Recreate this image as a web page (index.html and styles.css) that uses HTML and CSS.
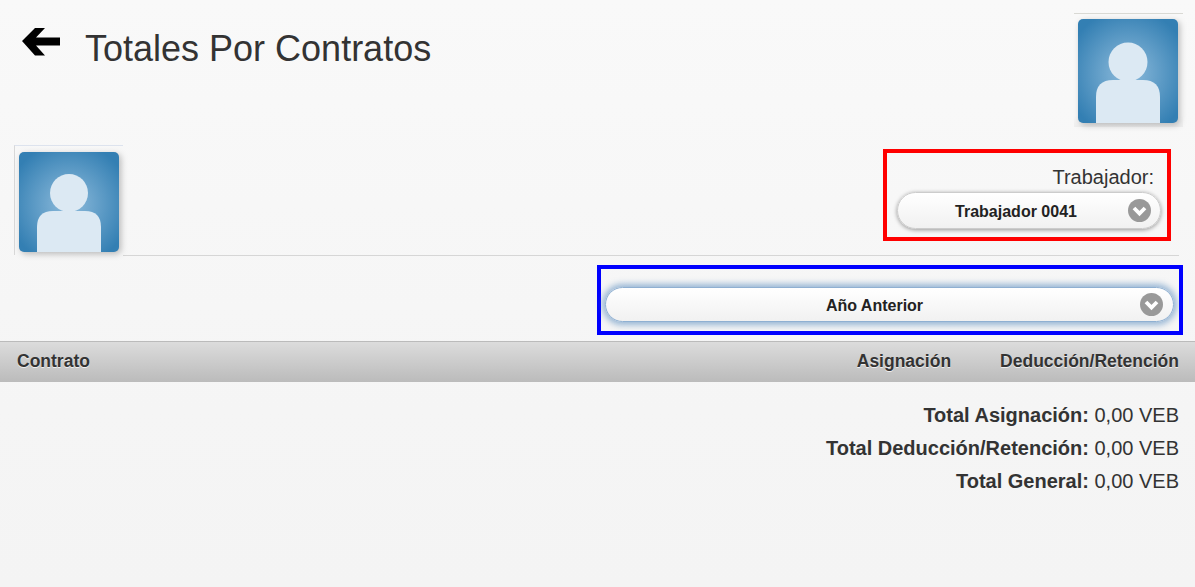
FILE: index.html
```html
<!DOCTYPE html>
<html lang="es">
<head>
<meta charset="utf-8">
<title>Totales Por Contratos</title>
<link rel="stylesheet" href="styles.css">
</head>
<body>
<div class="page">
  <header class="top">
    <a class="back" href="#" aria-label="Volver">
      <svg width="40" height="30" viewBox="0 0 40 30"><path d="M1 14 L14 1 L24 1 L15 10.5 L39 10.5 L39 18.5 L15 18.5 L24 28.5 L14 28.5 Z" fill="#000"/></svg>
    </a>
    <h1 class="title">Totales Por Contratos</h1>
    <div class="avatar avatar-top">
      <svg class="avatar-img" width="100" height="104" viewBox="0 0 100 104">
        <defs><radialGradient id="g1" cx="50%" cy="52%" r="62%"><stop offset="0" stop-color="#8fbcdc"/><stop offset="1" stop-color="#337fb3"/></radialGradient></defs>
        <rect width="100" height="104" rx="5" fill="url(#g1)"/>
        <circle cx="50" cy="43" r="19.5" fill="#dce9f3"/>
        <path d="M18 104 V78 Q18 61 35 61 H65 Q82 61 82 78 V104 Z" fill="#dce9f3"/>
      </svg>
    </div>
  </header>

  <section class="worker">
    <div class="avatar avatar-left">
      <svg class="avatar-img" width="100" height="100" viewBox="0 0 100 100">
        <defs><radialGradient id="g2" cx="50%" cy="52%" r="62%"><stop offset="0" stop-color="#8fbcdc"/><stop offset="1" stop-color="#337fb3"/></radialGradient></defs>
        <rect width="100" height="100" rx="5" fill="url(#g2)"/>
        <circle cx="50" cy="41" r="19" fill="#dce9f3"/>
        <path d="M18 100 V75 Q18 59 34 59 H66 Q82 59 82 75 V100 Z" fill="#dce9f3"/>
      </svg>
    </div>
    <div class="worker-main">
      <div class="red-box">
        <label class="field-label">Trabajador:</label>
        <div class="select select-worker">
          <span class="select-text">Trabajador 0041</span>
          <span class="chev"><svg width="23" height="23" viewBox="0 0 23 23"><circle cx="11.5" cy="11.5" r="11.5" fill="#999"/><path d="M6 9 L11.5 14.5 L17 9" fill="none" stroke="#fff" stroke-width="3.8"/></svg></span>
        </div>
      </div>
    </div>
  </section>

  <section class="year">
    <div class="blue-box">
      <div class="select select-year">
        <span class="select-text">Año Anterior</span>
        <span class="chev"><svg width="23" height="23" viewBox="0 0 23 23"><circle cx="11.5" cy="11.5" r="11.5" fill="#999"/><path d="M6 9 L11.5 14.5 L17 9" fill="none" stroke="#fff" stroke-width="3.8"/></svg></span>
      </div>
    </div>
  </section>

  <div class="thead">
    <span class="th-contract">Contrato</span>
    <span class="th-asig">Asignación</span>
    <span class="th-ded">Deducción/Retención</span>
  </div>

  <section class="totals">
    <p class="total"><b>Total Asignación:</b> 0,00 VEB</p>
    <p class="total"><b>Total Deducción/Retención:</b> 0,00 VEB</p>
    <p class="total"><b>Total General:</b> 0,00 VEB</p>
  </section>
</div>
</body>
</html>
```
FILE: styles.css
```css
* { box-sizing: border-box; }
html, body { margin: 0; height: 100%; }
body {
  font-family: "Liberation Sans", Arial, sans-serif;
  color: #333;
  background: linear-gradient(#f9f9f9, #f5f5f5 70%, #f4f4f4);
}
.page { width: 1195px; height: 587px; overflow: hidden; }

.top {
  display: flex;
  align-items: flex-start;
  height: 145px;
  padding: 13px 12px 0 21px;
}
.back { display: block; margin-top: 14px; width: 40px; height: 30px; flex: none; }
.title {
  margin: 15px 0 0 24px;
  font-size: 36px;
  line-height: 42px;
  font-weight: 400;
  flex: 1;
}
.avatar { flex: none; width: 109px; }
.avatar-top {
  height: 114px;
  border-top: 1px solid #d9d9d4;
  padding: 5px 5px 0 4px;
  background: linear-gradient(#f9f9f9 90%, #eeeeee);
}
.avatar-left {
  height: 110px;
  margin-left: 14px;
  border-top: 1px solid #dde3ee;
  border-left: 1px solid #d8d8d8;
  padding: 6px 4px 0 4px;
}
.avatar-img { display: block; filter: drop-shadow(2px 2px 3px rgba(0,0,0,.25)); }

.worker {
  display: flex;
  align-items: stretch;
  height: 111px;
  margin-right: 16px;
}
.worker-main {
  flex: 1;
  display: flex;
  justify-content: flex-end;
  align-items: flex-start;
  padding-right: 8px;
  border-bottom: 1px solid #d6d6d6;
}
.red-box {
  margin-top: 4px;
  width: 288px;
  height: 92px;
  border: 4px solid #f00;
  padding: 13px 6px 0 10px;
  text-align: right;
}
.field-label {
  display: block;
  font-size: 20px;
  line-height: 23px;
  padding-right: 7px;
  margin-bottom: 3px;
  color: #333;
}
.select {
  position: relative;
  display: flex;
  align-items: center;
  justify-content: center;
  border-radius: 19px;
  background: linear-gradient(#fff, #f1f1f1);
  font-size: 16px;
  font-weight: 700;
  color: #222;
}
.select-text { padding-top: 2px; }
.select-worker {
  height: 37px;
  padding-right: 26px;
  border: 1px solid #ccc;
  box-shadow: 0 1px 4px rgba(0,0,0,.4);
}
.select-year {
  height: 35px;
  padding-right: 30px;
  margin-left: -1px;
  border: 1px solid #8fb0d2;
  box-shadow: 0 0 6px 3px rgba(56,117,180,.5);
}
.chev { position: absolute; right: 9px; top: 50%; margin-top: -12px; height: 23px; }
.select-year .chev { right: 10px; }
.chev svg { display: block; }

.year {
  display: flex;
  justify-content: flex-end;
  height: 85px;
  padding: 9px 12px 0 0;
}
.blue-box {
  width: 586px;
  height: 70px;
  border: 4px solid #00f;
  padding: 18px 5px 0 5px;
}

.thead {
  display: flex;
  align-items: center;
  height: 41px;
  padding: 0 16px 2px 17px;
  border-top: 1px solid #bbb;
  background: linear-gradient(#dcdcdc, #bbb);
  font-size: 17.5px;
  font-weight: 700;
  color: #333;
  text-shadow: 0 1px 0 #eee;
}
.th-contract { flex: 1; }
.th-ded { margin-left: 49px; }

.totals { padding: 21px 16px 0 0; text-align: right; font-size: 20px; }
.total { margin: 0 0 9px; line-height: 24px; height: 24px; }
```
